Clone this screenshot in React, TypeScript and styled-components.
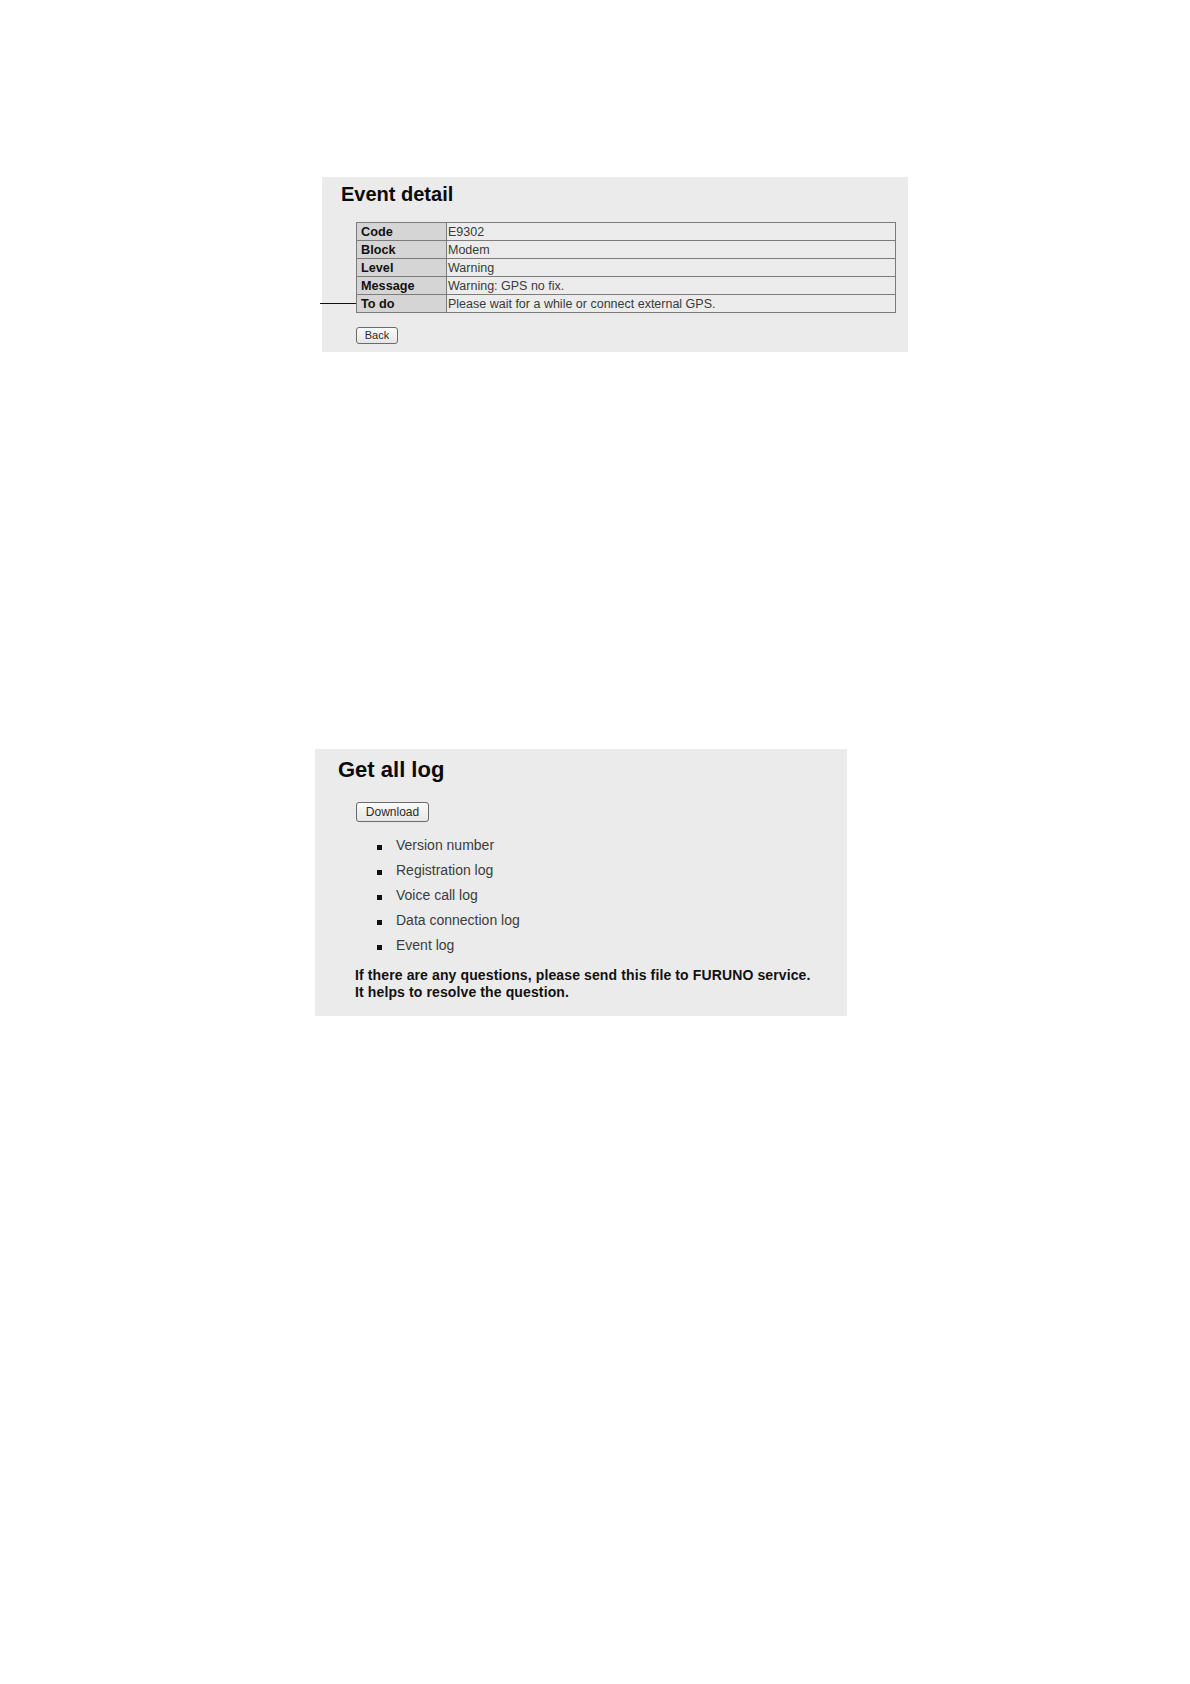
import React from "react";
import styled, { createGlobalStyle } from "styled-components";

const GlobalStyle = createGlobalStyle`
  html, body {
    margin: 0;
    padding: 0;
    background: #ffffff;
  }
  body {
    font-family: "Liberation Sans", Arial, sans-serif;
    color: #111;
  }
`;

const Page = styled.main`
  width: 1190px;
  min-height: 1684px;
  box-sizing: border-box;
  padding-top: 177px;
  display: flex;
  flex-direction: column;
  align-items: flex-start;
  background: #fff;
`;

const Panel = styled.section<{ $left: number; $top: number; $width: number; $pad: string }>`
  margin-left: ${(p) => p.$left}px;
  margin-top: ${(p) => p.$top}px;
  width: ${(p) => p.$width}px;
  padding: ${(p) => p.$pad};
  box-sizing: border-box;
  background: #ebebeb;
  display: flex;
  flex-direction: column;
  align-items: flex-start;
`;

const Title = styled.h1<{ $size: number }>`
  margin: 0;
  font-size: ${(p) => p.$size}px;
  line-height: ${(p) => p.$size}px;
  font-weight: 700;
  color: #0a0a0a;
`;

const TableWrap = styled.div`
  position: relative;
  margin-top: 18px;
  margin-left: 15px;
`;

const Leader = styled.span`
  position: absolute;
  left: -36px;
  top: 81px;
  width: 36px;
  height: 1px;
  background: #111;
`;

const Table = styled.div`
  display: grid;
  grid-template-columns: 90px 1fr;
  width: 540px;
  box-sizing: border-box;
  border-top: 1px solid #7c7c7c;
  border-left: 1px solid #7c7c7c;
`;

const Cell = styled.div<{ $label?: boolean }>`
  box-sizing: border-box;
  height: 18px;
  line-height: 19px;
  border-right: 1px solid #7c7c7c;
  border-bottom: 1px solid #7c7c7c;
  padding-left: ${(p) => (p.$label ? "4px" : "1px")};
  background: ${(p) => (p.$label ? "#d5d5d5" : "#ececec")};
  font-size: ${(p) => (p.$label ? "12.7px" : "12.5px")};
  font-weight: ${(p) => (p.$label ? 700 : 400)};
  color: ${(p) => (p.$label ? "#111" : "#3a3a3a")};
  white-space: nowrap;
  overflow: hidden;
`;

const Button = styled.button<{ $w: number; $h: number; $size: number; $mt: number }>`
  margin-top: ${(p) => p.$mt}px;
  margin-left: 15px;
  width: ${(p) => p.$w}px;
  height: ${(p) => p.$h}px;
  padding: 0;
  box-sizing: border-box;
  border: 1px solid #6a6a6a;
  border-radius: 3px;
  background: linear-gradient(#fbfbfb, #e6e6e6);
  font-family: "Liberation Sans", Arial, sans-serif;
  font-size: ${(p) => p.$size}px;
  line-height: 1;
  color: #2a2a2a;
  cursor: pointer;
`;

const DownloadButton = styled(Button)`
  margin-left: 18px;
`;

const List = styled.ul`
  list-style: none;
  margin: 11px 0 0 39px;
  padding: 0;
`;

const Item = styled.li`
  height: 25px;
  line-height: 25px;
  font-size: 14px;
  color: #3c3c3c;
  white-space: nowrap;
`;

const Square = styled.span`
  display: inline-block;
  width: 5px;
  height: 5px;
  background: #111;
  margin-right: 14px;
  vertical-align: baseline;
`;

const Note = styled.p`
  margin: 9px 0 0 17px;
  font-size: 14px;
  letter-spacing: 0.12px;
  line-height: 17px;
  font-weight: 700;
  color: #111;
`;

const rows: [string, string][] = [
  ["Code", "E9302"],
  ["Block", "Modem"],
  ["Level", "Warning"],
  ["Message", "Warning: GPS no fix."],
  ["To do", "Please wait for a while or connect external GPS."],
];

const logs = [
  "Version number",
  "Registration log",
  "Voice call log",
  "Data connection log",
  "Event log",
];

export default function App() {
  return (
    <>
      <GlobalStyle />
      <Page>
        <Panel $left={322} $top={0} $width={586} $pad="7px 12px 8px 19px">
          <Title $size={20}>Event detail</Title>
          <TableWrap>
            <Leader />
            <Table>
              {rows.map(([k, v]) => (
                <React.Fragment key={k}>
                  <Cell $label>{k}</Cell>
                  <Cell>{v}</Cell>
                </React.Fragment>
              ))}
            </Table>
          </TableWrap>
          <Button $w={42} $h={17} $size={11} $mt={14}>
            Back
          </Button>
        </Panel>

        <Panel $left={315} $top={397} $width={532} $pad="10px 0 15px 23px">
          <Title $size={22}>Get all log</Title>
          <DownloadButton $w={73} $h={20} $size={12} $mt={21}>
            Download
          </DownloadButton>
          <List>
            {logs.map((l) => (
              <Item key={l}>
                <Square />
                {l}
              </Item>
            ))}
          </List>
          <Note>
            If there are any questions, please send this file to FURUNO service.
            <br />
            It helps to resolve the question.
          </Note>
        </Panel>
      </Page>
    </>
  );
}
